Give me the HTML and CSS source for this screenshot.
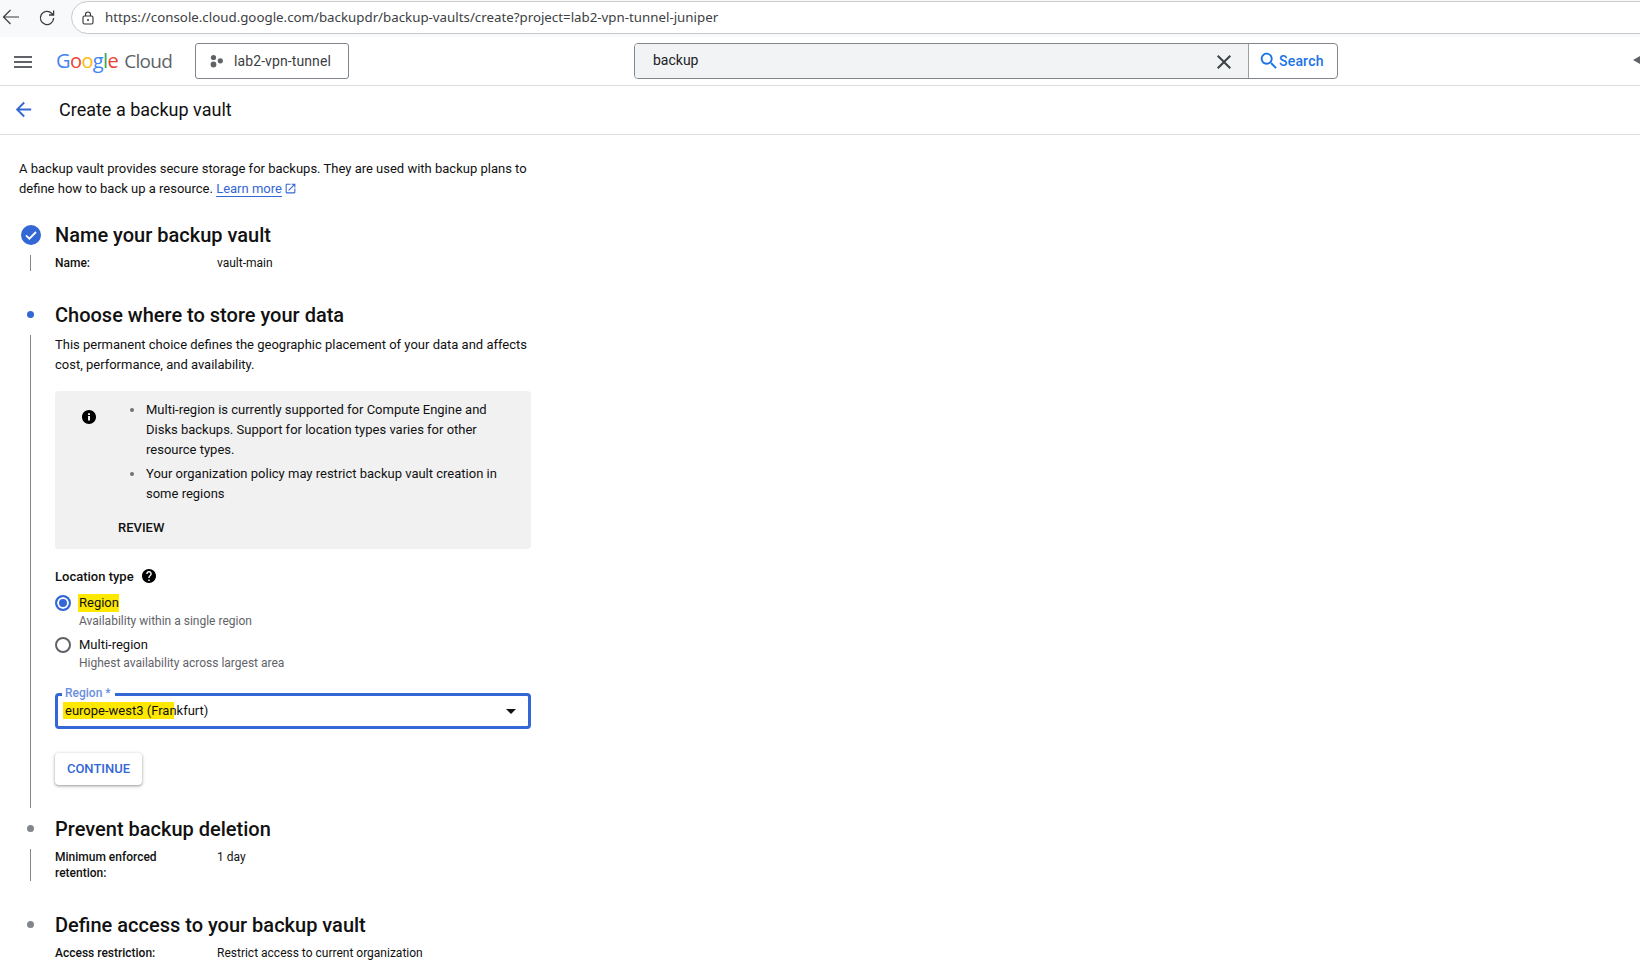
FILE: index.html
```html
<!DOCTYPE html>
<html lang="en">
<head>
<meta charset="utf-8">
<title>Create a backup vault</title>
<link rel="stylesheet" href="styles.css">
</head>
<body>
<div class="chrome">
  <svg class="chrome-back" viewBox="0 0 20 20"><path d="M18 10H2.5M9.5 3l-7 7 7 7" fill="none" stroke="#3c3c3c" stroke-width="1.2"/></svg>
  <svg class="chrome-reload" viewBox="0 0 20 20"><path d="M16.6 10a6.6 6.6 0 1 1-2-4.8L16.6 7M16.6 2.4V7H12" fill="none" stroke="#3c3c3c" stroke-width="1.3"/></svg>
  <div class="urlbar">
    <svg class="lock" viewBox="0 0 14 14"><rect x="2" y="5" width="10" height="8" rx="1.5" fill="none" stroke="#333" stroke-width="1.1"/><path d="M4.5 5V3.5a2.5 2.5 0 0 1 5 0V5" fill="none" stroke="#333" stroke-width="1.1"/><circle cx="7" cy="9" r="1" fill="#333"/></svg>
    <span class="url">https://console.cloud.google.com/backupdr/backup-vaults/create?project=lab2-vpn-tunnel-juniper</span>
  </div>
</div>
<header class="topbar">
  <svg class="menu" viewBox="0 0 18 12"><path d="M0 0h18v2H0zM0 5h18v2H0zM0 10h18v2H0z" fill="#5f6368"/></svg>
  <div class="logo"><span class="g-b">G</span><span class="g-r">o</span><span class="g-y">o</span><span class="g-b">g</span><span class="g-g">l</span><span class="g-r">e</span><span class="logo-cloud">Cloud</span></div>
  <div class="project">
    <svg class="project-icon" viewBox="0 0 14 14"><circle cx="4" cy="3.5" r="2.6" fill="#5f6368"/><circle cx="4" cy="10.5" r="2.9" fill="#5f6368"/><circle cx="10.8" cy="6.8" r="2.6" fill="#5f6368"/></svg>
    <span>lab2-vpn-tunnel</span>
  </div>
  <div class="search">
    <div class="search-field">
      <span class="search-text">backup</span>
      <svg class="search-close" viewBox="0 0 24 24"><path d="M19 6.41L17.59 5 12 10.59 6.41 5 5 6.41 10.59 12 5 17.59 6.41 19 12 13.41 17.59 19 19 17.59 13.41 12z" fill="#3c4043"/></svg>
    </div>
    <div class="search-btn">
      <svg class="search-icon" viewBox="0 0 24 24"><path d="M15.5 14h-.79l-.28-.27C15.41 12.59 16 11.11 16 9.5 16 5.91 13.09 3 9.5 3S3 5.91 3 9.5 5.91 16 9.5 16c1.61 0 3.09-.59 4.23-1.57l.27.28v.79l5 4.99L20.49 19l-4.99-5zm-6 0C7.01 14 5 11.99 5 9.5S7.01 5 9.5 5 14 7.01 14 9.5 11.99 14 9.5 14z" fill="#1a73e8"/></svg>
      <span>Search</span>
    </div>
  </div>
  <span class="edge-arrow"></span>
</header>
<div class="subbar">
  <svg class="back" viewBox="0 0 24 24"><path d="M20 11H7.83l5.59-5.59L12 4l-8 8 8 8 1.41-1.41L7.83 13H20v-2z" fill="#3367d6"/></svg>
  <h1 class="page-title">Create a backup vault</h1>
</div>
<main class="content">
  <p class="intro">A backup vault provides secure storage for backups. They are used with backup plans to define how to back up a resource. <a class="link">Learn more</a><svg class="ext" viewBox="0 0 24 24"><path d="M19 19H5V5h7V3H5c-1.11 0-2 .9-2 2v14c0 1.1.89 2 2 2h14c1.1 0 2-.9 2-2v-7h-2v7zM14 3v2h3.59l-9.83 9.83 1.41 1.41L19 6.41V10h2V3h-7z" fill="#3367d6"/></svg></p>

  <section class="step">
    <div class="step-head">
      <span class="step-mark"><svg class="check" viewBox="2 2 20 20"><circle cx="12" cy="12" r="10" fill="#3367d6"/><path d="M7 12.3l3.4 3.4L17 9" fill="none" stroke="#fff" stroke-width="1.8"/></svg></span>
      <h2 class="step-title">Name your backup vault</h2>
    </div>
    <div class="step-body">
      <div class="summary"><span class="summary-key">Name:</span><span>vault-main</span></div>
    </div>
  </section>

  <section class="step step-active">
    <div class="step-head">
      <span class="step-mark"><span class="dot dot-blue"></span></span>
      <h2 class="step-title">Choose where to store your data</h2>
    </div>
    <div class="step-body step-body-active">
      <p class="desc">This permanent choice defines the geographic placement of your data and affects cost, performance, and availability.</p>
      <div class="notice">
        <svg class="notice-icon" viewBox="2 2 20 20"><path d="M12 2C6.48 2 2 6.48 2 12s4.48 10 10 10 10-4.48 10-10S17.52 2 12 2zm1.4 15h-2.8v-6.4h2.8V17zm0-8h-2.8V6.6h2.8V9z" fill="#000"/></svg>
        <div class="notice-main">
          <ul class="notice-list">
            <li>Multi-region is currently supported for Compute Engine and Disks backups. Support for location types varies for other resource types.</li>
            <li>Your organization policy may restrict backup vault creation in some regions</li>
          </ul>
          <div class="review">REVIEW</div>
        </div>
      </div>
      <div class="loc-label"><span>Location type</span><svg class="help" viewBox="2 2 20 20"><path d="M12 2C6.48 2 2 6.48 2 12s4.48 10 10 10 10-4.48 10-10S17.52 2 12 2zm1 17h-2v-2h2v2zm2.07-7.75l-.9.92C13.45 12.9 13 13.5 13 15h-2v-.5c0-1.1.45-2.1 1.17-2.83l1.24-1.26c.37-.36.59-.86.59-1.41 0-1.1-.9-2-2-2s-2 .9-2 2H8c0-2.21 1.79-4 4-4s4 1.79 4 4c0 .88-.36 1.68-.93 2.25z" fill="#000"/></svg></div>
      <div class="radio-row">
        <span class="radio radio-on"></span>
        <div class="radio-text"><div class="radio-label"><span class="hl-label">Region</span></div><div class="radio-sub">Availability within a single region</div></div>
      </div>
      <div class="radio-row">
        <span class="radio"></span>
        <div class="radio-text"><div class="radio-label">Multi-region</div><div class="radio-sub">Highest availability across largest area</div></div>
      </div>
      <div class="select">
        <span class="select-label">Region *</span>
        <span class="select-value">europe-west3 (Frankfurt)</span>
        <span class="select-arrow"></span>
      </div>
      <div class="continue">CONTINUE</div>
    </div>
  </section>

  <section class="step">
    <div class="step-head">
      <span class="step-mark"><span class="dot"></span></span>
      <h2 class="step-title">Prevent backup deletion</h2>
    </div>
    <div class="step-body">
      <div class="summary"><span class="summary-key">Minimum enforced retention:</span><span>1 day</span></div>
    </div>
  </section>

  <section class="step step-last">
    <div class="step-head">
      <span class="step-mark"><span class="dot"></span></span>
      <h2 class="step-title">Define access to your backup vault</h2>
    </div>
    <div class="step-body step-body-last">
      <div class="summary"><span class="summary-key">Access restriction:</span><span>Restrict access to current organization</span></div>
    </div>
  </section>
</main>
</body>
</html>
```
FILE: styles.css
```css
* { box-sizing: border-box; }
html, body { margin: 0; padding: 0; height: 100%; overflow: hidden; background: #fff; }
body { font-family: Roboto, "Liberation Sans", sans-serif; color: #111; font-size: 13px; }
h1, h2, p, ul { margin: 0; padding: 0; }

.chrome { height: 37px; background: #f8f9fa; display: flex; align-items: flex-start; overflow: hidden; padding-top: 1px; }
.chrome-back { width: 20px; height: 20px; margin: 6px 0 0 1px; flex: none; }
.chrome-reload { width: 20px; height: 20px; margin: 7px 0 0 16px; flex: none; }
.urlbar { flex: none; width: 1640px; height: 33px; margin-left: 14px; background: #fff; border: 1px solid #c8c9cc; border-radius: 17px; display: flex; align-items: center; padding-left: 9px; }
.lock { width: 14px; height: 14px; flex: none; }
.url { margin: -2px 0 0 10px; font-family: "Noto Sans", Roboto, sans-serif; font-size: 13.3px; color: #3c4043; white-space: nowrap; }

.topbar { position: relative; height: 49px; border-bottom: 1px solid #dadce0; display: flex; align-items: center; padding-left: 14px; background: #fff; }
.menu { width: 18px; height: 12px; flex: none; margin-top: 1px; }
.logo { margin-left: 24px; width: 118px; font-family: "Open Sans", sans-serif; font-size: 20px; letter-spacing: -0.6px; white-space: nowrap; flex: none; margin-top: -1px; }
.g-b { color: #4285f4; } .g-r { color: #ea4335; } .g-y { color: #fbbc04; } .g-g { color: #34a853; }
.logo-cloud { color: #5f6368; margin-left: 6px; font-size: 19px; letter-spacing: -0.7px; }
.project { margin-left: 21px; width: 154px; height: 36px; border: 1px solid #80868b; border-radius: 3px; display: flex; align-items: center; padding-left: 13px; font-size: 14px; letter-spacing: 0.1px; color: #3c4043; flex: none; margin-top: -1px; }
.project-icon { width: 15px; height: 14px; margin-right: 10px; flex: none; }
.search { margin-left: 285px; width: 704px; height: 36px; border: 1px solid #80868b; border-radius: 4px; display: flex; overflow: hidden; flex: none; margin-top: -1px; }
.search-field { flex: 1; background: #f1f3f4; display: flex; align-items: center; justify-content: space-between; padding: 0 12px 0 18px; border-right: 1px solid #9aa0a6; }
.search-text { font-size: 14px; color: #202124; margin-top: -2px; }
.search-close { width: 24px; height: 24px; margin-top: 2px; }
.search-btn { width: 88px; display: flex; align-items: center; padding-left: 9px; color: #1a73e8; font-size: 14px; font-weight: 500; letter-spacing: 0.2px; flex: none; }
.search-icon { width: 22px; height: 22px; flex: none; margin-right: -1px; }
.edge-arrow { position: absolute; right: 0; top: 19px; width: 0; height: 0; border: 4px solid transparent; border-right: 7px solid #5f6368; border-left: 0; }

.subbar { height: 49px; border-bottom: 1px solid #dadce0; display: flex; align-items: center; padding: 0 0 2px 12px; }
.back { width: 23px; height: 23px; flex: none; }
.page-title { margin-left: 24px; font-size: 18px; font-weight: 400; color: #111; }

.content { width: 550px; padding: 24px 0 0 19px; }
.intro { width: 515px; line-height: 20px; font-size: 13px; margin-bottom: 24px; }
.link { color: #3367d6; text-decoration: underline; text-underline-offset: 3px; }
.ext { width: 13px; height: 13px; margin-left: 2px; vertical-align: -2px; }

.step { margin-bottom: 32px; }
.step-active { margin-bottom: 9px; }
.step-last { margin-bottom: 0; }
.step-head { display: flex; align-items: center; height: 24px; margin-bottom: 8px; }
.step-mark { width: 24px; height: 24px; display: flex; align-items: center; justify-content: center; flex: none; }
.check { width: 20px; height: 20px; }
.dot { width: 7px; height: 7px; border-radius: 50%; background: #80868b; margin: 0 2px 2px 0; }
.dot-blue { background: #3367d6; }
.step-title { margin-left: 12px; font-size: 20px; font-weight: 500; color: #111; line-height: 24px; }
.step-body { margin-left: 11px; border-left: 1px solid #80868b; padding-left: 24px; width: 501px; }
.step-body-active { padding-bottom: 23px; }
.step-body-last { border-left-color: transparent; }
.summary { display: flex; font-size: 12px; line-height: 16px; }
.summary-key { width: 162px; flex: none; font-weight: 500; padding-right: 30px; }

.desc { line-height: 20px; font-size: 13px; margin-bottom: 16px; width: 476px; }
.notice { width: 476px; height: 158px; background: #f1f1f1; border-radius: 4px; display: flex; padding-top: 9px; margin-bottom: 17px; }
.notice-icon { width: 14px; height: 14px; flex: none; margin: 10px 0 0 27px; }
.notice-main { margin-left: 22px; width: 410px; }
.notice-list { list-style: none; }
.notice-list li { position: relative; padding-left: 28px; line-height: 20px; margin-bottom: 4px; width: 400px; }
.notice-list li::before { content: ""; position: absolute; left: 12px; top: 8px; width: 4px; height: 4px; border-radius: 50%; background: #6f7377; }
.review { margin-top: 14px; font-size: 13px; font-weight: 500; line-height: 20px; }

.loc-label { display: flex; align-items: center; height: 20px; font-size: 13px; font-weight: 500; margin-bottom: 8px; }
.help { width: 14px; height: 14px; margin-left: 8px; }
.radio-row { display: flex; margin-bottom: 7px; }
.radio { width: 16px; height: 16px; border: 2px solid #5f6368; border-radius: 50%; flex: none; margin-top: 1px; }
.radio-on { border-color: #3367d6; background: #3367d6; box-shadow: inset 0 0 0 2px #fff; }
.radio-text { margin-left: 8px; }
.radio-label { font-size: 13px; line-height: 17px; padding-bottom: 2px; }
.radio-sub { font-size: 12px; line-height: 16px; color: #5f6368; }
.hl-label { background: #ffe800; padding: 1px 0 2px 1px; margin-left: -1px; }
.select { position: relative; width: 476px; height: 36px; margin-top: 22px; border: 3px solid #3367d6; border-radius: 4px; display: flex; align-items: center; padding-left: 5px; font-size: 13px; }
.select-label { position: absolute; left: 4px; top: -10px; padding: 0 4px 0 3px; background: #fff; font-size: 12px; font-weight: 500; line-height: 14px; color: #6a8fe0; }
.select-value { margin-top: -1px; padding: 0 2px; line-height: 17px; background: linear-gradient(#ffe800, #ffe800) no-repeat 0 0 / 111px 17px; }
.select-arrow { position: absolute; right: 12px; top: 13px; width: 0; height: 0; border: 5px solid transparent; border-top: 5px solid #111; border-bottom: 0; }
.continue { width: 87px; height: 32px; padding-bottom: 2px; margin-top: 24px; border-radius: 4px; background: #fff; box-shadow: 0 1px 3px 1px rgba(60,64,67,.2), 0 1px 2px rgba(60,64,67,.3); color: #3367d6; font-size: 13px; font-weight: 500; display: flex; align-items: center; justify-content: center; }
```
